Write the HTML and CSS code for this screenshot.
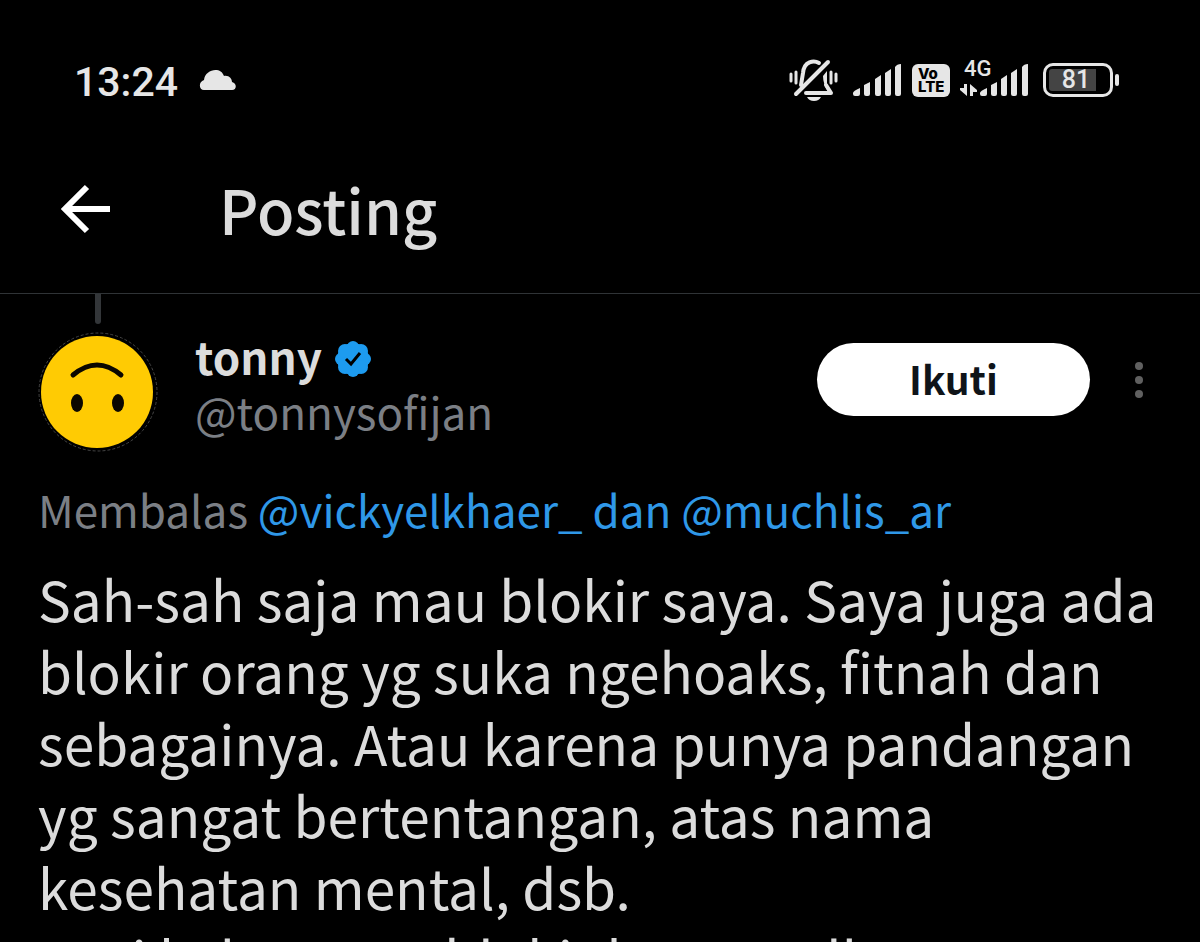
FILE: index.html
```html
<!DOCTYPE html>
<html lang="id">
<head>
  <meta charset="UTF-8">
  <meta name="viewport" content="width=device-width, initial-scale=1.0">
  <title>Posting</title>
  <link rel="stylesheet" href="styles.css">
</head>
<body>
  <!-- Status bar -->
  <div class="status">
    <span class="time">13:24</span>
    <svg class="cloud" width="38" height="22" viewBox="0 0 38 22" fill="#e6e6e6"><path d="M5 21C0 21-1 13 5 11C6 0 22-3 25 7C30 6 33 10 33 13C38 14 38 21 33 21z"/></svg>
    <div class="status-icons">
      <svg width="50" height="44" viewBox="0 0 50 44" fill="none" stroke="#e6e6e6" stroke-linecap="round" stroke-linejoin="round">
        <path stroke-width="3" d="M2 16v7M7 14v11M42 14v11M47 16v7"/>
        <path stroke-width="4" d="M12 27L14 15C15 3 25 2 30 5M17 35h25l-5-8"/>
        <path fill="#e6e6e6" stroke="none" d="M34 18l4-5v14l5 8h-3q-6-8-6-17z"/>
        <path stroke-width="4" d="M7 36L39 4"/>
        <path fill="#e6e6e6" stroke="none" d="M18 39h14q-2 4-7 4t-7-4z"/>
      </svg>
      <svg class="signal" width="49" height="32" viewBox="0 0 49 32" fill="#e6e6e6">
        <path d="M0 29Q0 27 7 24V30Q7 32 5 32H2Q0 32 0 30zM11 21l6-3v12q0 2-2 2h-2q-2 0-2-2zM22 15l6-4v19q0 2-2 2h-2q-2 0-2-2zM32 9l6-4v25q0 2-2 2h-2q-2 0-2-2zM42 3q2-3 6-3v30q0 2-2 2h-2q-2 0-2-2z"/>
      </svg>
      <span class="volte"><span>Vo</span><span>LTE</span></span>
      <div class="mobile">
        <span class="network">4G</span>
        <svg width="69" height="32" viewBox="0 0 69 32" fill="#e6e6e6">
          <path d="M4 20h3v12L0 26v-2h4zM10 32V20l7 6v2h-4v4z"/>
          <path d="M20 29Q20 27 27 24V30Q27 32 25 32H22Q20 32 20 30zM31 21l6-3v12q0 2-2 2h-2q-2 0-2-2zM41 15l6-4v19q0 2-2 2h-2q-2 0-2-2zM51 9l6-4v25q0 2-2 2h-2q-2 0-2-2zM62 3q2-3 6-3v30q0 2-2 2h-2q-2 0-2-2z"/>
        </svg>
      </div>
      <div class="battery"><span class="level">81</span></div>
    </div>
  </div>

  <header class="topbar">
    <a class="back" href="#" aria-label="Kembali">
      <svg width="50" height="50" viewBox="0 0 50 50" fill="none" stroke="#fff" stroke-width="6"><path d="M27 3L5 25l22 22M5 25h45"/></svg>
    </a>
    <h1>Posting</h1>
  </header>

  <main class="post">
    <div class="author">
      <div class="thread">
        <div class="thread-line"></div>
        <svg width="120" height="120" viewBox="0 0 120 120">
          <circle cx="60" cy="60" r="59" fill="none" stroke="#444" stroke-dasharray="3 2"/>
          <circle cx="59" cy="60" r="56" fill="#ffcb03"/>
          <path d="M35 43Q59 23 83 43" fill="none" stroke="#0b0700" stroke-width="5" stroke-linecap="round"/>
          <ellipse cx="39" cy="71" rx="6" ry="9" fill="#0b0700"/>
          <ellipse cx="80" cy="71" rx="6" ry="9" fill="#0b0700"/>
        </svg>
      </div>
      <div class="names">
        <div class="name">
          <strong>tonny</strong>
          <svg width="38" height="38" viewBox="0 0 38 38">
            <g fill="#1d9bf0">
              <circle cx="19" cy="19" r="16"/>
              <circle cx="19" cy="7" r="6"/><circle cx="27" cy="11" r="7"/><circle cx="31" cy="19" r="6"/><circle cx="27" cy="27" r="7"/>
              <circle cx="19" cy="31" r="6"/><circle cx="11" cy="27" r="7"/><circle cx="7" cy="19" r="6"/><circle cx="11" cy="11" r="7"/>
            </g>
            <path d="M12 19l5 5 9-11" fill="none" stroke="#000" stroke-width="3"/>
          </svg>
        </div>
        <div class="handle">@tonnysofijan</div>
      </div>
      <button class="follow">Ikuti</button>
      <button class="more" aria-label="Lainnya">
        <svg width="10" height="38" viewBox="0 0 10 38" fill="#606060"><circle cx="5" cy="5" r="4"/><circle cx="5" cy="19" r="4"/><circle cx="5" cy="33" r="4"/></svg>
      </button>
    </div>

    <p class="reply">Membalas <a href="#">@vickyelkhaer_ dan @muchlis_ar</a></p>

    <p class="text">Sah-sah saja mau blokir saya. Saya juga ada blokir orang yg suka ngehoaks, fitnah dan sebagainya. Atau karena punya pandangan yg sangat bertentangan, atas nama kesehatan mental, dsb.<br>Tapi kalau memblokir karena all</p>
  </main>
</body>
</html>
```
FILE: styles.css
```css
:root {
  --bg: #000;
  --text: #dcdcdc;
  --icon: #e6e6e6;
  --muted: #7b7f85;
  --link: #2f98e8;
}
* { margin: 0; padding: 0; box-sizing: border-box; }
body {
  background: var(--bg);
  color: var(--text);
  font-family: "Noto Sans CJK SC", "Noto Sans", sans-serif;
  height: 100vh;
  overflow: hidden;
}
svg { display: block; flex-shrink: 0; }
a { color: var(--link); text-decoration: none; }
button { border: none; background: none; font-family: inherit; cursor: pointer; }

.status {
  display: flex;
  align-items: center;
  height: 144px;
  padding: 16px 87px 0 74px;
  font-family: Roboto, sans-serif;
  font-weight: 500;
  color: var(--icon);
}
.time { padding-top: 4px; font-size: 41px; line-height: 48px; }
.cloud { margin-left: 21px; }
.status-icons {
  display: flex;
  align-items: center;
  margin-left: auto;
}
.signal { margin-left: 14px; }
.volte {
  display: flex;
  flex-direction: column;
  justify-content: center;
  width: 38px;
  height: 33px;
  margin: 0 10px;
  padding-left: 6px;
  border-radius: 6px;
  background: var(--icon);
  color: #000;
  font: 800 15px/13px Inter, sans-serif;
}
.mobile { position: relative; }
.network {
  position: absolute;
  left: 4px;
  top: -5px;
  font-size: 22px;
  line-height: 20px;
}
.battery {
  position: relative;
  width: 70px;
  height: 34px;
  margin-left: 14px;
  padding: 3px;
  border: 3px solid var(--icon);
  border-radius: 10px;
}
.battery::after {
  content: "";
  position: absolute;
  right: -9px;
  top: 8px;
  width: 4px;
  height: 12px;
  border-radius: 2px;
  background: var(--icon);
}
.level {
  display: block;
  padding-right: 4px;
  background: linear-gradient(to right, #444 81%, transparent 81%);
  border-radius: 3px;
  font-size: 25px;
  line-height: 22px;
  text-align: center;
}

.topbar {
  display: flex;
  align-items: center;
  height: 150px;
  padding: 0 60px 20px;
  border-bottom: 1px solid #2f3336;
}
.topbar h1 {
  margin-left: 109px;
  font-size: 61px;
  font-weight: 500;
  line-height: 80px;
}

.post { padding: 0 38px; }
.author {
  display: flex;
  align-items: flex-start;
}
.thread {
  display: flex;
  flex-direction: column;
  align-items: center;
  gap: 8px;
}
.thread-line {
  width: 6px;
  height: 30px;
  border-radius: 0 0 3px 3px;
  background: #333639;
}
.names {
  flex: 1;
  margin-left: 37px;
  padding-top: 35px;
  line-height: 55px;
}
.name { display: flex; align-items: center; gap: 12px; }
.name strong { font-size: 44px; }
.name svg { margin-top: 4px; }
.handle { color: var(--muted); font-size: 44px; }
.follow {
  width: 273px;
  height: 73px;
  margin-top: 49px;
  padding-bottom: 4px;
  border-radius: 37px;
  background: #fff;
  color: #0f1419;
  font-size: 39px;
  font-weight: 700;
}
.more { margin: 67px 18px 0 44px; }

.reply {
  margin-top: 27px;
  color: var(--muted);
  font-size: 44px;
  line-height: 60px;
}
.text {
  margin-top: 23px;
  font-size: 55px;
  line-height: 72px;
}
```
